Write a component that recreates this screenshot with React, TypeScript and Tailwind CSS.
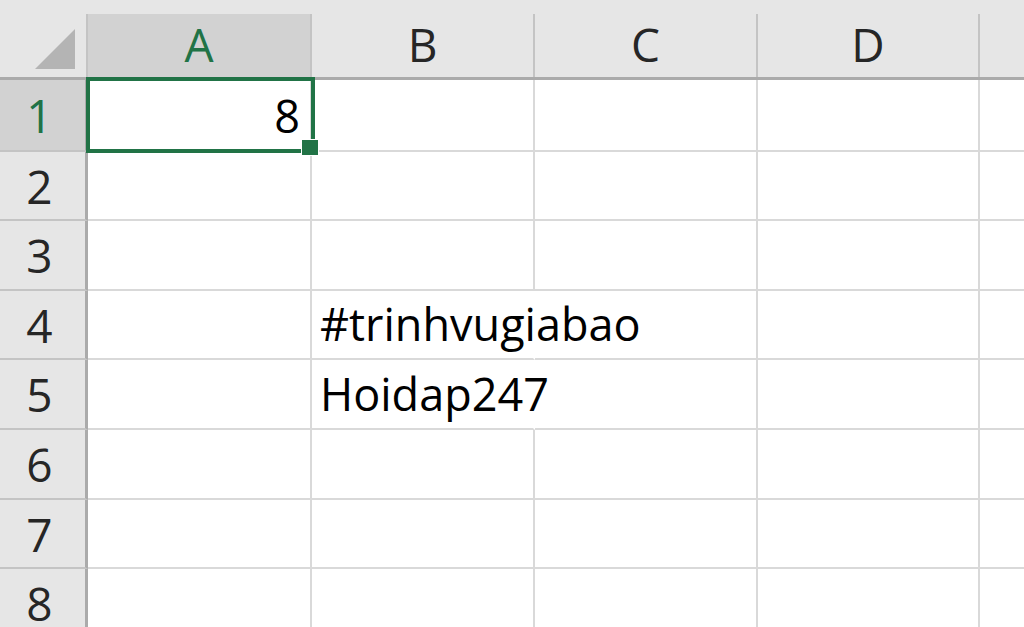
const COLS = ["A", "B", "C", "D", "E"];
const ROWS = [1, 2, 3, 4, 5, 6, 7, 8];

// column widths incl. right grid line
const colW = ["w-[224px]", "w-[223px]", "w-[223px]", "w-[222px]", "w-[223px]"];
// row heights incl. bottom grid line
const rowH = ["h-[72px]", "h-[69px]", "h-[70px]", "h-[69px]", "h-[70px]", "h-[70px]", "h-[69px]", "h-[70px]"];

const values: Record<string, string> = {
  A1: "8",
  B4: "#trinhvugiabao",
  B5: "Hoidap247",
};

function ColHeader({ label, idx }: { label: string; idx: number }) {
  const selected = label === "A";
  // last column is scrolled past the window edge, its letter is not visible
  const visible = idx < COLS.length - 1;
  return (
    <div
      className={`${colW[idx]} h-full shrink-0 flex items-center justify-center border-r-2 border-[#c4c4c4] text-[46px] leading-none ${
        selected ? "bg-[#d2d2d2] text-[#217346]" : "bg-[#e6e6e6] text-[#262626]"
      }`}
    >
      {visible && <span className="-mt-[4px]">{label}</span>}
    </div>
  );
}

function Cell({ col, row, idx }: { col: string; row: number; idx: number }) {
  const key = `${col}${row}`;
  const v = values[key];
  const isNum = v !== undefined && /^\d+$/.test(v);
  const overflows = v !== undefined && !isNum;
  const selected = key === "A1";
  return (
    <div
      className={`${colW[idx]} h-full shrink-0 relative flex items-end border-b-2 border-b-[#d9d9d9] ${
        overflows ? "border-r-2 border-r-transparent" : "border-r-2 border-r-[#d9d9d9]"
      } ${isNum ? "justify-end pr-[10px]" : "justify-start pl-[8px]"}`}
    >
      {v !== undefined && (
        <span className="relative z-10 whitespace-nowrap text-[45px] leading-none text-black pb-[12px] bg-white">
          {v}
        </span>
      )}
      {selected && (
        <div className="pointer-events-none absolute z-20 -left-[2px] -top-[3px] w-[229px] h-[76px] border-[4px] border-[#217346]">
          <div className="absolute -right-[8px] -bottom-[7px] w-[18px] h-[17px] bg-[#217346] border border-white" />
        </div>
      )}
    </div>
  );
}

export default function App() {
  return (
    <div
      className="w-[1024px] h-[627px] overflow-hidden bg-[#e6e6e6] pt-[14px]"
      style={{ fontFamily: '"Open Sans", "Noto Sans", sans-serif' }}
    >
      {/* column header row */}
      <div className="flex h-[66px] border-b-[3px] border-[#ababab] box-border">
        <div className="w-[88px] h-full shrink-0 flex items-end justify-end border-r-2 border-[#c4c4c4] pr-[11px] pb-[8px]">
          <svg width="40" height="40" viewBox="0 0 40 40">
            <polygon points="40,0 40,40 0,40" fill="#b4b4b4" />
          </svg>
        </div>
        {COLS.map((c, i) => (
          <ColHeader key={c} label={c} idx={i} />
        ))}
      </div>

      {/* body rows */}
      {ROWS.map((r, ri) => (
        <div key={r} className={`flex ${rowH[ri]}`}>
          <div
            className={`w-[88px] h-full shrink-0 flex items-center justify-center border-r-[3px] border-b-2 border-r-[#ababab] border-b-[#c4c4c4] text-[46px] leading-none ${
              r === 1 ? "bg-[#d2d2d2] text-[#217346]" : "bg-[#e6e6e6] text-[#262626]"
            }`}
          >
            <span className="-ml-[6px]">{r}</span>
          </div>
          <div className="flex flex-1 bg-white">
            {COLS.map((c, i) => (
              <Cell key={c} col={c} row={r} idx={i} />
            ))}
          </div>
        </div>
      ))}
    </div>
  );
}
